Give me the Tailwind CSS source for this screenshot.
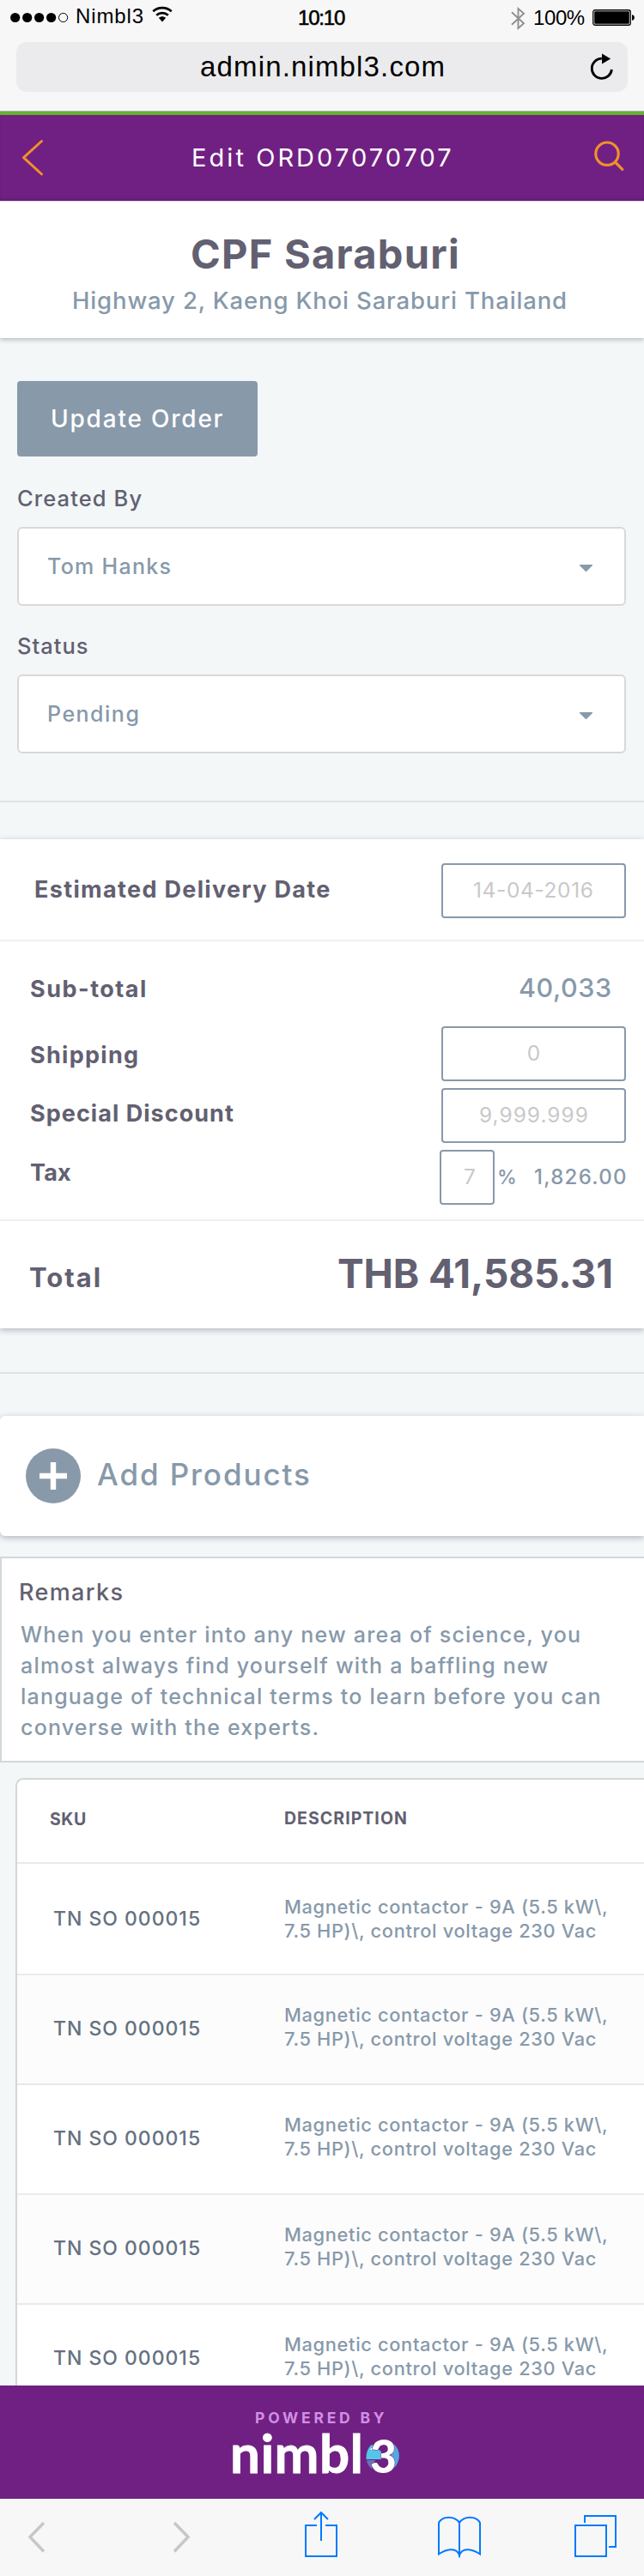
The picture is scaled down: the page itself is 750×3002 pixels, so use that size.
<!DOCTYPE html>
<html lang="en">
<head>
<meta charset="utf-8">
<title>Edit ORD07070707</title>
<script src="https://cdn.jsdelivr.net/npm/@tailwindcss/browser@4"></script>
</head>
<body class="w-[750px] h-[3002px] overflow-hidden bg-[#f3f7f8] font-['Inter',sans-serif] whitespace-nowrap flex flex-col text-[#8799aa]">

<!-- Browser chrome -->
<header class="h-[130px] shrink-0 bg-[#f7f7f7] border-b border-[#b2b2b2] text-black font-['Liberation_Sans',sans-serif]">
  <div class="h-[41px] flex items-start">
    <svg class="ml-[12px] mt-[14px] w-[68px] h-[13px] shrink-0" viewBox="0 0 68 13"><circle cx="5.7" cy="6.5" r="5.6"/><circle cx="19.7" cy="6.5" r="5.6"/><circle cx="33.6" cy="6.5" r="5.6"/><circle cx="47.6" cy="6.5" r="5.6"/><circle cx="61.6" cy="6.5" r="5.1" fill="none" stroke="#000"/></svg>
    <span class="ml-[8px] mt-[4px] w-[80px] text-[24px] leading-[30px] tracking-[0.9px]">Nimbl3</span>
    <svg class="ml-[9px] mt-[7px] w-[24px] h-[19px] shrink-0" viewBox="0 0 24 19" fill="none" stroke="#000" stroke-width="2.8"><path d="M1.3 6.3C7.5.8 16.5.8 22.7 6.3"/><path d="M5.2 10.7c4-3.5 9.6-3.5 13.6 0"/><path d="M7.8 13.8c2.6-2.2 5.8-2.2 8.4 0L12 18.6z" fill="#000" stroke="none"/></svg>
    <span class="ml-[146px] mt-[6px] w-[58px] text-[24px] leading-[30px] tracking-[-1.2px] [-webkit-text-stroke:0.6px_black]">10:10</span>
    <svg class="ml-[190px] mt-[8px] w-[17px] h-[27px] shrink-0" viewBox="0 0 17 27" fill="none" stroke="#909090" stroke-width="1.9"><path d="M1 6.2 15 19.3 8.5 25V2L15 7.7 1 20.8"/></svg>
    <span class="ml-[9px] mt-[6px] w-[62px] text-[24px] leading-[30px] tracking-[-0.4px]">100%</span>
    <svg class="ml-[7px] mt-[11px] w-[50px] h-[19px] shrink-0" viewBox="0 0 50 19"><rect x=".75" y=".75" width="43.5" height="17.5" rx="2.2" fill="none" stroke="#000" stroke-width="1.3"/><rect x="2.2" y="2.2" width="40.6" height="14.6" rx="1"/><path d="M46 6.2c3.8 0 3.8 6.6 0 6.6z"/></svg>
  </div>
  <div class="mt-[8px] ml-[19px] w-[712px] h-[58px] rounded-[12px] bg-[#ebebed] flex items-center">
    <span class="ml-[214px] w-[286px] text-[33px] leading-[56px] tracking-[1.15px]">admin.nimbl3.com</span>
    <svg class="ml-[168px] w-[28px] h-[32px] shrink-0 -mt-[1px]" viewBox="0 0 28 32"><path d="M13.8 6.2A11.6 11.6 0 1 0 25.4 19" fill="none" stroke="#000" stroke-width="2.8"/><path d="M14 .6v12l10.2-6z"/></svg>
  </div>
</header>

<!-- App bar -->
<div class="h-[104px] shrink-0 border-t-4 border-[#65b32e] bg-[#702082] flex items-center shadow-[inset_0_-3px_3px_-1px_rgba(60,0,80,0.25)]">
  <svg class="ml-[24px] w-[28px] h-[44px] shrink-0" viewBox="0 0 28 44" fill="none" stroke="#f0912b" stroke-width="3" stroke-linecap="round" stroke-linejoin="round"><path d="M24.5 2.5 3.5 21.7 24.5 41"/></svg>
  <h1 class="ml-[171px] w-[306px] text-[29px] leading-[100px] font-normal tracking-[3.06px] text-white">Edit ORD07070707</h1>
  <svg class="ml-[161px] -mt-[5px] w-[38px] h-[36px] shrink-0" viewBox="0 0 38 36" fill="none" stroke="#f0912b" stroke-width="3.2" stroke-linecap="round"><circle cx="17" cy="15.2" r="13.2"/><path d="m26.5 25 8.3 8.3"/></svg>
</div>

<!-- Customer -->
<section class="h-[160px] shrink-0 bg-white border-t border-[#e4dbe8] shadow-[0_2px_5px_rgba(98,96,113,0.4)] flex flex-col">
  <h2 class="mt-[30px] ml-[222px] text-[47px] leading-[62px] font-bold tracking-[1.25px] text-[#626071]">CPF Saraburi</h2>
  <p class="mt-[3px] ml-[84px] text-[27.5px] leading-[40px] font-medium tracking-[0.85px]">Highway 2, Kaeng Khoi Saraburi Thailand</p>
</section>

<!-- Order form -->
<section class="h-[541px] shrink-0 px-[20px] pt-[50px] border-b-2 border-[#e0e3e5] flex flex-col items-start">
  <button class="w-[280px] h-[88px] rounded-[4px] bg-[#8899aa] pl-[39px] text-left text-[28px] leading-[88px] font-medium tracking-[1.79px] text-white">Update Order</button>
  <label class="mt-[29px] text-[25.5px] leading-[40px] font-medium tracking-[1.1px] text-[#626071]">Created By</label>
  <div class="mt-[13px] w-[709px] h-[92px] rounded-[6px] border-2 border-[#d8d8d9] bg-white flex items-center justify-between pl-[33px] pr-[37px]">
    <span class="text-[25px] font-medium tracking-[1.29px] leading-[40px] mb-[1px]">Tom Hanks</span>
    <svg class="mt-[3px] w-[15px] h-[8px]" viewBox="0 0 15 8" fill="#8799aa"><path d="M0 0h15v1L8 8H7L0 1z"/></svg>
  </div>
  <label class="mt-[27px] text-[25.5px] leading-[40px] font-medium tracking-[1px] text-[#626071]">Status</label>
  <div class="mt-[13px] w-[709px] h-[92px] rounded-[6px] border-2 border-[#d8d8d9] bg-white flex items-center justify-between pl-[33px] pr-[37px]">
    <span class="text-[25px] font-medium tracking-[1.5px] leading-[40px] mb-[1px]">Pending</span>
    <svg class="mt-[3px] w-[15px] h-[8px]" viewBox="0 0 15 8" fill="#8799aa"><path d="M0 0h15v1L8 8H7L0 1z"/></svg>
  </div>
</section>

<!-- Totals -->
<section class="mt-[43px] h-[570px] shrink-0 bg-white shadow-[0_2px_7px_rgba(98,96,113,0.45)] flex flex-col text-[#626071] font-bold text-[27px]">
  <div class="h-[119px] shrink-0 border-b-2 border-[#efeff4] flex items-start">
    <span class="ml-[40px] mt-[39px] w-[474px] text-[27px] leading-[40px] tracking-[1.33px]">Estimated Delivery Date</span>
    <div class="mt-[28px] w-[215px] h-[64px] rounded-[4px] border-2 border-[#8899aa] pl-[35px] text-[24.5px] leading-[59px] font-normal tracking-[0.62px] text-[#c9c9c9]">14-04-2016</div>
  </div>
  <div class="h-[326px] shrink-0 border-b-2 border-[#efeff4] flex">
    <div class="w-[475px] shrink-0 pl-[35px] flex flex-col">
      <span class="mt-[36px] leading-[40px] tracking-[1.5px]">Sub-total</span>
      <span class="mt-[37px] leading-[40px] tracking-[1.29px]">Shipping</span>
      <span class="mt-[28px] leading-[40px] tracking-[1.04px]">Special Discount</span>
      <span class="mt-[29px] leading-[40px] tracking-[0.14px]">Tax</span>
    </div>
    <div class="w-[275px] flex flex-col text-[24.5px] font-normal text-[#c9c9c9]">
      <span class="mt-[34px] ml-[129px] text-[30.5px] leading-[40px] font-medium tracking-[0.58px] text-[#8799aa]">40,033</span>
      <div class="mt-[25px] ml-[39px] w-[215px] h-[64px] shrink-0 rounded-[4px] border-2 border-[#8899aa] text-center leading-[59px]">0</div>
      <div class="mt-[8px] ml-[39px] w-[215px] h-[64px] shrink-0 rounded-[4px] border-2 border-[#8899aa] pl-[42px] leading-[59px] tracking-[1px]">9,999.999</div>
      <div class="mt-[8px] ml-[37px] flex items-center">
        <div class="w-[64px] h-[64px] shrink-0 rounded-[4px] border-2 border-[#8899aa] pl-[26px] leading-[59px]">7</div>
        <span class="ml-[3px] w-[43px] leading-[62px] font-medium text-[#8799aa] text-[23px] mb-[1px]">%</span>
        <span class="leading-[62px] text-[24px] font-medium tracking-[1.28px] text-[#8799aa] mb-[1px]">1,826.00</span>
      </div>
    </div>
  </div>
  <div class="flex items-start">
    <span class="ml-[34px] mt-[46px] w-[359px] text-[31px] leading-[40px] tracking-[2px]">Total</span>
    <span class="mt-[31px] text-[46px] leading-[60px] tracking-[-0.1px]">THB 41,585.31</span>
  </div>
</section>

<div class="mt-[51px] h-[2px] shrink-0 bg-[#e0e3e5]"></div>

<!-- Add products -->
<section class="mt-[49px] h-[140px] shrink-0 rounded-l-[6px] bg-white shadow-[0_2px_7px_rgba(98,96,113,0.45)] flex items-start">
  <svg class="ml-[30px] mt-[38px] w-[64px] h-[64px]" viewBox="0 0 64 64"><circle cx="32" cy="32" r="32" fill="#8899aa"/><path d="M32 16v32M16 32h32" stroke="#fff" stroke-width="6.4"/></svg>
  <span class="ml-[19px] mt-[38px] text-[35px] leading-[60px] font-medium tracking-[1.9px]">Add Products</span>
</section>

<!-- Remarks -->
<section class="mt-[24px] h-[240px] w-[760px] shrink-0 bg-white border-2 border-[#d3d7d9] pl-[22px] flex flex-col">
  <h3 class="mt-[20px] -ml-[2px] text-[27px] leading-[40px] font-medium tracking-[1.38px] text-[#626071]">Remarks</h3>
  <p class="mt-[11px] text-[25px] leading-[36px] font-medium tracking-[1.2px]">When you enter into any new area of science, you<br>almost always find yourself with a baffling new<br>language of technical terms to learn before you can<br>converse with the experts.</p>
</section>

<!-- Products table -->
<section class="mt-[18px] ml-[18px] w-[760px] h-[708px] shrink-0 overflow-hidden rounded-tl-[9px] border-l-2 border-t-2 border-[#d3d7d7] bg-white">
  <div class="h-[98px] border-b-2 border-[#e9e9e9] flex items-start text-[19.5px] leading-[40px] font-bold text-[#626071]">
    <span class="ml-[38px] mt-[26px] w-[273px] tracking-[0.6px]">SKU</span>
    <span class="mt-[25px] tracking-[1.04px]">DESCRIPTION</span>
  </div>
  <div class="h-[130px] border-b-2 border-[#ebebeb] flex items-start">
    <span class="ml-[42px] mt-[44px] w-[269px] text-[23px] leading-[40px] font-medium tracking-[0.98px] text-[#647181]">TN SO 000015</span>
    <p class="mt-[36px] text-[21.8px] leading-[28px] font-medium tracking-[0.67px]">Magnetic contactor - 9A (5.5 kW\,<br>7.5 HP)\, control voltage 230 Vac</p>
  </div>
  <div class="h-[128px] border-b-2 border-[#e9e9e9] bg-[#fcfcfc] flex items-start">
    <span class="ml-[42px] mt-[42px] w-[269px] text-[23px] leading-[40px] font-medium tracking-[0.98px] text-[#647181]">TN SO 000015</span>
    <p class="mt-[32px] text-[21.8px] leading-[28px] font-medium tracking-[0.67px]">Magnetic contactor - 9A (5.5 kW\,<br>7.5 HP)\, control voltage 230 Vac</p>
  </div>
  <div class="h-[128px] border-b-2 border-[#ebebeb] flex items-start">
    <span class="ml-[42px] mt-[42px] w-[269px] text-[23px] leading-[40px] font-medium tracking-[0.98px] text-[#647181]">TN SO 000015</span>
    <p class="mt-[32px] text-[21.8px] leading-[28px] font-medium tracking-[0.67px]">Magnetic contactor - 9A (5.5 kW\,<br>7.5 HP)\, control voltage 230 Vac</p>
  </div>
  <div class="h-[128px] border-b-2 border-[#e9e9e9] bg-[#fcfcfc] flex items-start">
    <span class="ml-[42px] mt-[42px] w-[269px] text-[23px] leading-[40px] font-medium tracking-[0.98px] text-[#647181]">TN SO 000015</span>
    <p class="mt-[32px] text-[21.8px] leading-[28px] font-medium tracking-[0.67px]">Magnetic contactor - 9A (5.5 kW\,<br>7.5 HP)\, control voltage 230 Vac</p>
  </div>
  <div class="h-[94px] flex items-start">
    <span class="ml-[42px] mt-[42px] w-[269px] text-[23px] leading-[40px] font-medium tracking-[0.98px] text-[#647181]">TN SO 000015</span>
    <p class="mt-[32px] text-[21.8px] leading-[28px] font-medium tracking-[0.67px]">Magnetic contactor - 9A (5.5 kW\,<br>7.5 HP)\, control voltage 230 Vac</p>
  </div>
</section>

<!-- Footer -->
<footer class="h-[132px] shrink-0 bg-[#702082] flex flex-col items-start">
  <span class="mt-[28px] ml-[297px] text-[17.5px] leading-[20px] font-bold tracking-[3.8px] text-[#d08fe4]">POWERED BY</span>
  <svg class="mt-[2px] ml-[264px] w-[210px] h-[60px] overflow-visible" viewBox="0 0 210 60">
    <text x="4" y="51.7" font-family="Lato" font-weight="700" font-size="62" textLength="155" lengthAdjust="spacing" fill="#fff" stroke="#fff" stroke-width=".8">nimbl</text>
    <path d="M169 19 180 27v9h-17.5C162.3 29 164 23 169 19z" fill="#54c5eb"/>
    <path d="M163 37h10l-4 10C165.5 44.500 163.6 41 163 37z" fill="#6a74b8"/>
    <path d="M194.5 18C203 25 203 39 194.5 46.5L191 32z" fill="#55a9e0"/>
    <text x="167" y="51.5" font-family="Lato" font-weight="900" font-size="53" textLength="31" lengthAdjust="spacingAndGlyphs" fill="#fff" stroke="#702082" stroke-width="1" paint-order="stroke">3</text>
    <circle cx="168.5" cy="24" r="1" fill="#fff"/>
  </svg>
</footer>

<!-- Browser toolbar -->
<nav class="h-[90px] shrink-0 bg-[#f7f7f7] border-b border-[#f3f7f8] flex items-start">
  <svg class="ml-[31px] mt-[25px] w-[24px] h-[40px]" viewBox="0 0 24 40" fill="none" stroke="#c7c7c7" stroke-width="3.5"><path d="M20 3 4 19.5 20 36.5"/></svg>
  <svg class="ml-[145px] mt-[25px] w-[24px] h-[40px]" viewBox="0 0 24 40" fill="none" stroke="#c7c7c7" stroke-width="3.5"><path d="M3 3 19 19.5 3 36.5"/></svg>
  <svg class="ml-[131px] mt-[14px] w-[38px] h-[56px]" viewBox="0 0 38 56" fill="none" stroke="#007aff" stroke-width="2"><path d="M14 17H1v36h36V17H24M19 35V2M11 10l8-8 8 8"/></svg>
  <svg class="ml-[117px] mt-[18px] w-[50px] h-[54px]" viewBox="0 0 50 54" fill="none" stroke="#007aff" stroke-width="2"><path d="M25 50V10C20 1.5 5 1.5 1 10V46.5C9 41 22 37.5 25 48 28 37.5 41 41 49 46.5V10C45 1.5 30 1.5 25 10"/></svg>
  <svg class="ml-[109px] mt-[18px] w-[50px] h-[52px]" viewBox="0 0 50 52" fill="none" stroke="#007aff" stroke-width="2"><path d="M1 13h36v36H1zM12 10V2h36v36h-8"/></svg>
</nav>
</body>
</html>
